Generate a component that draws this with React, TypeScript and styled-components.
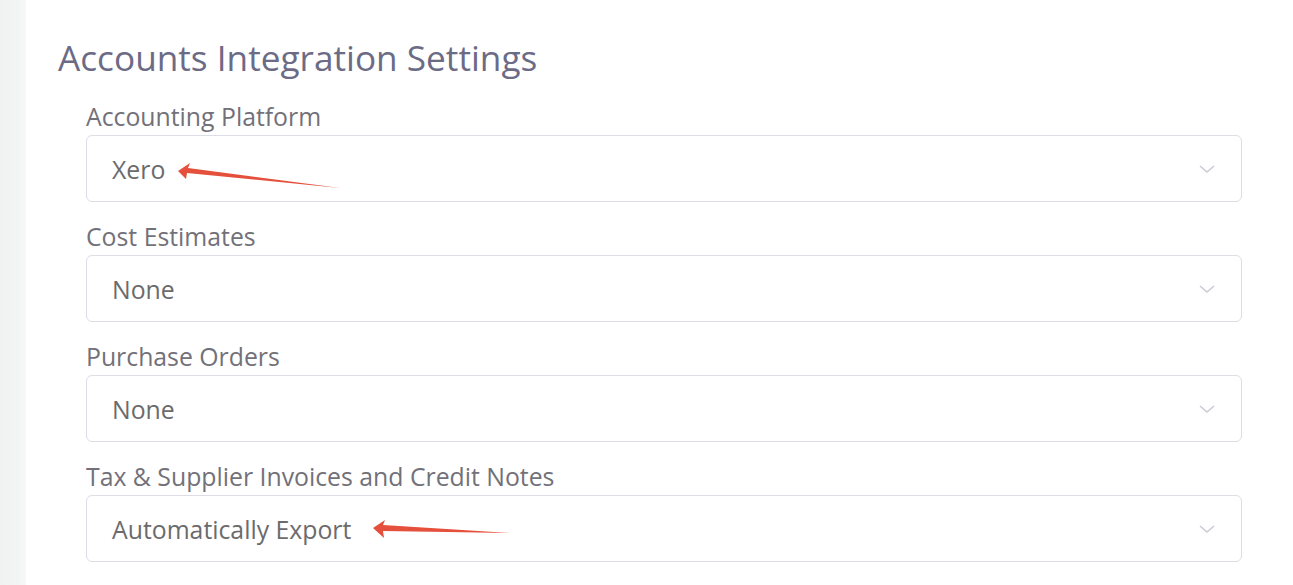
import React from 'react';
import styled, { createGlobalStyle } from 'styled-components';

const GlobalStyle = createGlobalStyle`
  html, body {
    margin: 0;
    padding: 0;
    background: #ffffff;
    font-family: 'Open Sans', 'Liberation Sans', sans-serif;
  }
`;

const Page = styled.div`
  display: flex;
  width: 1293px;
  height: 585px;
  overflow: hidden;
`;

const Sidebar = styled.div`
  width: 26px;
  flex-shrink: 0;
  background: linear-gradient(to right, #f0f1f1 0%, #f3f4f4 70%, #f7f7f7 100%);
`;

const Main = styled.div`
  flex: 1;
  padding: 37px 51px 0 32px;
`;

const Title = styled.h1`
  margin: 0;
  font-size: 35.2px;
  line-height: 40px;
  font-weight: 400;
  color: #6c6b86;
`;

const Form = styled.div`
  display: flex;
  flex-direction: column;
  padding-left: 28px;
  margin-top: 24px;
`;

const Field = styled.div`
  display: flex;
  flex-direction: column;
  & + & {
    margin-top: 19px;
  }
`;

const Label = styled.label`
  font-size: 24.8px;
  line-height: 30px;
  color: #727179;
  margin-bottom: 4px;
`;

const Select = styled.div`
  position: relative;
  display: flex;
  align-items: center;
  justify-content: space-between;
  height: 67px;
  box-sizing: border-box;
  border: 1px solid #dddde6;
  border-radius: 6px;
  padding: 0 26px 0 25px;
`;

const Value = styled.span`
  font-size: 24.8px;
  color: #6b6b6d;
`;

const Arrow = styled.svg`
  position: absolute;
  left: 0;
  top: 0;
  pointer-events: none;
`;

const Chevron = () => (
  <svg width="16" height="10" viewBox="0 0 16 10">
    <polyline points="1,2 8,8 15,2" fill="none" stroke="#cccbd6" strokeWidth="1.6" />
  </svg>
);

interface FieldProps {
  label: string;
  value: string;
  arrow?: string;
}

const SelectField: React.FC<FieldProps> = ({ label, value, arrow }) => (
  <Field>
    <Label>{label}</Label>
    <Select>
      <Value>{value}</Value>
      <Chevron />
      {arrow && (
        <Arrow width="500" height="67">
          <polygon points={arrow} fill="#e4503b" />
        </Arrow>
      )}
    </Select>
  </Field>
);

const App: React.FC = () => (
  <>
    <GlobalStyle />
    <Page>
      <Sidebar />
      <Main>
        <Title>Accounts Integration Settings</Title>
        <Form>
          <SelectField
            label="Accounting Platform"
            value="Xero"
            arrow="91,35 103,27 101,32 253,52 100,37 99,43"
          />
          <SelectField label="Cost Estimates" value="None" />
          <SelectField label="Purchase Orders" value="None" />
          <SelectField
            label="Tax & Supplier Invoices and Credit Notes"
            value="Automatically Export"
            arrow="286,32 298,24 296,29 423,37 296,35 297,42"
          />
        </Form>
      </Main>
    </Page>
  </>
);

export default App;
